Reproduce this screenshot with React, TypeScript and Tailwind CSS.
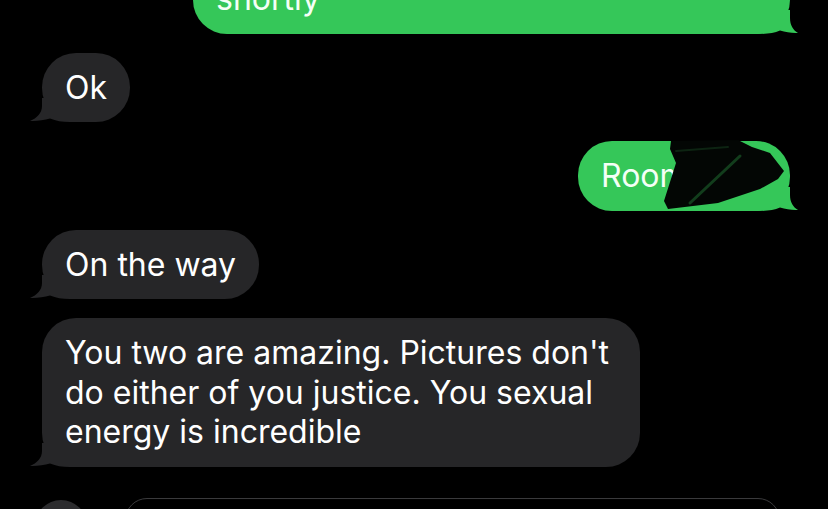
import type { ReactNode } from 'react'

const font = { fontFamily: 'Inter, "Noto Sans", sans-serif' }

function Tail({ side, color }: { side: 'left' | 'right'; color: string }) {
  if (side === 'left') {
    return (
      <svg className="absolute bottom-0 left-[-12px]" width="48" height="24" viewBox="0 0 48 24">
        <path d="M12 0 L12 8 C12 15 7 20 0 23 C6 23.5 14 22 20 20.5 C26 23 32 24 40 24 L48 24 L48 0 Z" fill={color} />
      </svg>
    )
  }
  return (
    <svg className="absolute bottom-0 right-[-8px]" width="48" height="24" viewBox="0 0 48 24">
      <path d="M40 0 L40 8 C40 15 43 20 48 23 C42 23.5 36 22 30 20.5 C24 23 18 24 8 24 L0 24 L0 0 Z" fill={color} />
    </svg>
  )
}

function Incoming({ children, className = '' }: { children: ReactNode; className?: string }) {
  return (
    <div className="flex justify-start pl-[42px]">
      <div className={`relative rounded-[34px] bg-[#262628] px-[23px] py-[15px] text-white ${className}`}>
        <Tail side="left" color="#262628" />
        <div className="relative">{children}</div>
      </div>
    </div>
  )
}

function Outgoing({ children, className = '' }: { children: ReactNode; className?: string }) {
  return (
    <div className="flex justify-end pr-[38px]">
      <div className={`relative rounded-[34px] bg-[#35c759] px-[23px] py-[15px] text-[#f4fff6] ${className}`}>
        <Tail side="right" color="#35c759" />
        <div className="relative">{children}</div>
      </div>
    </div>
  )
}

export default function App() {
  return (
    <div className="h-[509px] w-[828px] overflow-hidden bg-black text-[32px] leading-[39.5px]" style={font}>
      <div className="mt-[-36px] flex flex-col gap-[19px]">
        <Outgoing className="w-[597px]">shortly</Outgoing>
        <Incoming>Ok</Incoming>
        <Outgoing className="w-[212px]">
          <span>Room</span>
          {/* room number is scribbled out in the original */}
          <svg className="absolute left-[-23px] top-[-15px] overflow-visible" width="212" height="69" viewBox="0 0 212 69">
            <path d="M128 36 C128 28 134 23 142 24" fill="none" stroke="#d8f3de" strokeWidth="3" />
            <path
              d="M93 0 L160 -1 L174 6 L192 12 L206 30 L200 38 L182 48 L140 62 L90 68 L86 60 L98 22 L92 8 Z"
              fill="#030604"
            />
            <path d="M112 62 L162 15" stroke="#123d1c" strokeWidth="3" strokeLinecap="round" />
            <path d="M98 10 L150 6" stroke="#0d2412" strokeWidth="2" strokeLinecap="round" />
          </svg>
        </Outgoing>
        <Incoming>On the way</Incoming>
        <Incoming className="w-[598px]">
          You two are amazing. Pictures don't do either of you justice. You sexual energy is incredible
        </Incoming>
      </div>

      {/* compose bar, cut off at the bottom */}
      <div className="mt-[31px] flex items-start gap-[38px] pl-[35px]">
        <div className="mt-[2px] h-[52px] w-[52px] rounded-full bg-[#2c2c2e]" />
        <div className="h-[44px] w-[655px] rounded-[22px] border-[1.5px] border-[#3a3a3c]" />
      </div>
    </div>
  )
}
